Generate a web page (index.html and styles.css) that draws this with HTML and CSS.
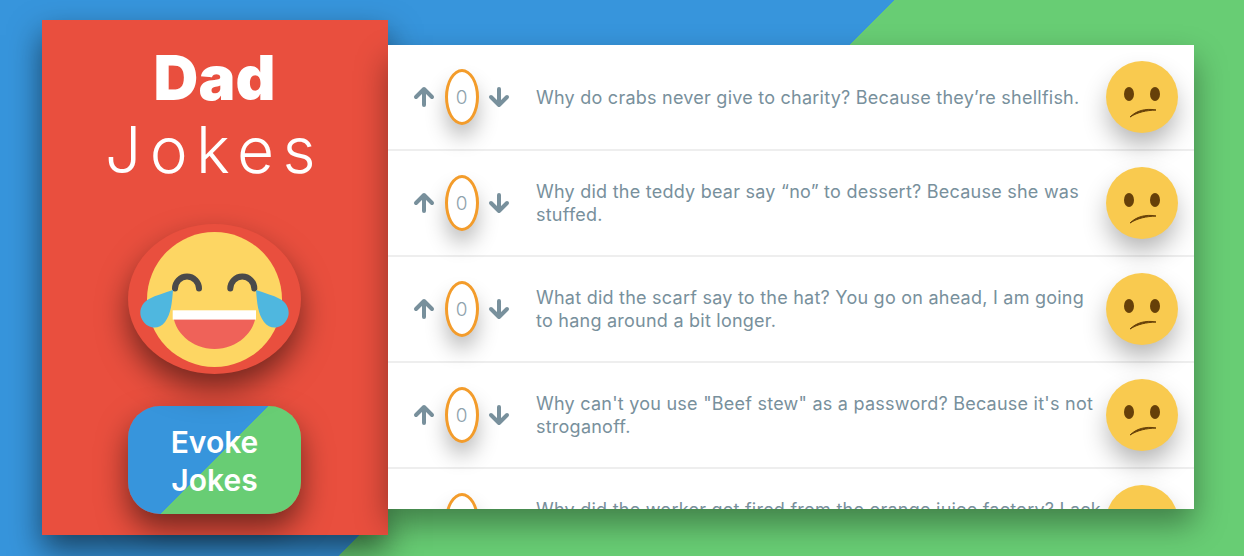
FILE: index.html
```html
<!DOCTYPE html>
<html lang="en">
<head>
  <meta charset="UTF-8" />
  <title>Dad Jokes</title>
  <link rel="stylesheet" href="styles.css">
</head>
<body>
  <div class="container">
    <aside class="sidebar">
      <h1 class="title"><span class="title-top">Dad</span> <span class="title-bottom">Jokes</span></h1>
      <div class="laugh">
        <svg class="laugh-face" viewBox="0 0 135 135">
          <circle cx="67.5" cy="67.5" r="67.5" fill="#fdd663"/>
          <path d="M28 56.5 A12 12 0 0 1 52 56.5 M83.3 56.5 A12 12 0 0 1 107.3 56.5" fill="none" stroke="#4a4a4a" stroke-width="6" stroke-linecap="round"/>
          <path d="M26 80 H109 C109 100 90 117 67.5 117 C45 117 26 100 26 80 Z" fill="#ef6259"/>
          <rect x="25.7" y="78.3" width="83.3" height="9.3" fill="#fff"/>
        </svg>
        <svg class="laugh-tears" viewBox="0 0 150 38">
          <path d="M33 0 C32 13 31 24 25 32 C19 40 8 39 3 31 C-2 24 0 14 9 9 C16 5 25 3 33 0 Z" fill="#4fb7df"/>
          <path d="M116 0 C117 13 118 24 124 32 C130 40 141 39 146 31 C151 24 149 14 140 9 C133 5 124 3 116 0 Z" fill="#4fb7df"/>
        </svg>
      </div>
      <button class="evoke">Evoke Jokes</button>
    </aside>
    <main class="jokes">
      <div class="joke">
        <div class="rating">
          <svg class="arrow" viewBox="0 0 22 22"><path d="M11 19 V3 M3 11 L11 3 L19 11"/></svg>
          <span class="score">0</span>
          <svg class="arrow" viewBox="0 0 22 22"><path d="M11 3 V19 M3 11 L11 19 L19 11"/></svg>
        </div>
        <p class="text">Why do crabs never give to charity? Because they’re shellfish.</p>
        <svg class="face" viewBox="0 0 72 72"><ellipse cx="23" cy="33" rx="5" ry="7" fill="#664009"/><ellipse cx="49" cy="33" rx="5" ry="7" fill="#664009"/><path d="M24 56 C30 50 39 47 50 49 C40 49.5 32 51 24 56 Z" fill="#664009" stroke="#664009" stroke-width="1"/></svg>
      </div>
      <div class="joke">
        <div class="rating">
          <svg class="arrow" viewBox="0 0 22 22"><path d="M11 19 V3 M3 11 L11 3 L19 11"/></svg>
          <span class="score">0</span>
          <svg class="arrow" viewBox="0 0 22 22"><path d="M11 3 V19 M3 11 L11 19 L19 11"/></svg>
        </div>
        <p class="text">Why did the teddy bear say “no” to dessert? Because she was stuffed.</p>
        <svg class="face" viewBox="0 0 72 72"><ellipse cx="23" cy="33" rx="5" ry="7" fill="#664009"/><ellipse cx="49" cy="33" rx="5" ry="7" fill="#664009"/><path d="M24 56 C30 50 39 47 50 49 C40 49.5 32 51 24 56 Z" fill="#664009" stroke="#664009" stroke-width="1"/></svg>
      </div>
      <div class="joke">
        <div class="rating">
          <svg class="arrow" viewBox="0 0 22 22"><path d="M11 19 V3 M3 11 L11 3 L19 11"/></svg>
          <span class="score">0</span>
          <svg class="arrow" viewBox="0 0 22 22"><path d="M11 3 V19 M3 11 L11 19 L19 11"/></svg>
        </div>
        <p class="text">What did the scarf say to the hat? You go on ahead, I am going to hang around a bit longer.</p>
        <svg class="face" viewBox="0 0 72 72"><ellipse cx="23" cy="33" rx="5" ry="7" fill="#664009"/><ellipse cx="49" cy="33" rx="5" ry="7" fill="#664009"/><path d="M24 56 C30 50 39 47 50 49 C40 49.5 32 51 24 56 Z" fill="#664009" stroke="#664009" stroke-width="1"/></svg>
      </div>
      <div class="joke">
        <div class="rating">
          <svg class="arrow" viewBox="0 0 22 22"><path d="M11 19 V3 M3 11 L11 3 L19 11"/></svg>
          <span class="score">0</span>
          <svg class="arrow" viewBox="0 0 22 22"><path d="M11 3 V19 M3 11 L11 19 L19 11"/></svg>
        </div>
        <p class="text">Why can't you use "Beef stew" as a password? Because it's not stroganoff.</p>
        <svg class="face" viewBox="0 0 72 72"><ellipse cx="23" cy="33" rx="5" ry="7" fill="#664009"/><ellipse cx="49" cy="33" rx="5" ry="7" fill="#664009"/><path d="M24 56 C30 50 39 47 50 49 C40 49.5 32 51 24 56 Z" fill="#664009" stroke="#664009" stroke-width="1"/></svg>
      </div>
      <div class="joke">
        <div class="rating">
          <svg class="arrow" viewBox="0 0 22 22"><path d="M11 19 V3 M3 11 L11 3 L19 11"/></svg>
          <span class="score">0</span>
          <svg class="arrow" viewBox="0 0 22 22"><path d="M11 3 V19 M3 11 L11 19 L19 11"/></svg>
        </div>
        <p class="text">Why did the worker get fired from the orange juice factory? Lack of concentration.</p>
        <svg class="face" viewBox="0 0 72 72"><ellipse cx="23" cy="33" rx="5" ry="7" fill="#664009"/><ellipse cx="49" cy="33" rx="5" ry="7" fill="#664009"/><path d="M24 56 C30 50 39 47 50 49 C40 49.5 32 51 24 56 Z" fill="#664009" stroke="#664009" stroke-width="1"/></svg>
      </div>
    </main>
  </div>
</body>
</html>
```

FILE: styles.css
```css
:root {
  --blue: #3795dc;
  --green: #68cd74;
  --red: #e94f3e;
  --slate: #78909c;
}

* {
  box-sizing: border-box;
}

body {
  margin: 0;
  height: 556px;
  overflow: hidden;
  font-family: "Inter", "Open Sans", sans-serif;
  background: linear-gradient(135deg, var(--blue) 49.7%, var(--green) 49.7%);
}

.container {
  display: flex;
  align-items: flex-start;
  height: 100%;
  padding: 20px 50px 0 42px;
}

.sidebar {
  display: flex;
  flex-direction: column;
  align-items: center;
  flex: 0 0 346px;
  height: 515px;
  padding: 24px 1px 0 0;
  background: var(--red);
  box-shadow: 0 15px 30px rgba(0, 0, 0, 0.55);
}

.title {
  margin: 0;
  text-align: center;
  color: #fff;
  font-weight: 400;
}

.title span {
  display: block;
}

.title-top {
  font-size: 62px;
  font-weight: 900;
  line-height: 68px;
}

.title-bottom {
  font-size: 64px;
  font-weight: 300;
  line-height: 76px;
  letter-spacing: 8.5px;
}

.laugh {
  position: relative;
  display: flex;
  align-items: center;
  justify-content: center;
  width: 173px;
  height: 150px;
  margin-top: 36px;
  border-radius: 50%;
  background: var(--red);
  box-shadow: 0 15px 30px rgba(0, 0, 0, 0.5);
}

.laugh-face {
  width: 135px;
  height: 135px;
}

.laugh-tears {
  position: absolute;
  left: 12px;
  top: 66px;
  width: 150px;
  height: 38px;
}

.evoke {
  width: 173px;
  height: 108px;
  margin-top: 32px;
  padding: 2px 30px 0;
  border: 0;
  border-radius: 32px;
  color: #fff;
  font-family: "Inter", sans-serif;
  font-size: 30px;
  font-weight: 600;
  line-height: 38px;
  background: linear-gradient(135deg, var(--blue) 50%, var(--green) 50%);
  box-shadow: 0 15px 30px rgba(0, 0, 0, 0.5);
}

.jokes {
  flex: 1;
  height: 464px;
  margin-top: 25px;
  overflow: hidden;
  background: #fff;
  box-shadow: 0 15px 30px rgba(0, 0, 0, 0.38);
  z-index: 1;
}

.joke {
  display: flex;
  align-items: center;
  height: 106px;
  padding: 0 16px 0 25px;
  border-bottom: 2px solid #eee;
}

.rating {
  display: flex;
  align-items: center;
  flex: 0 0 97px;
  justify-content: space-between;
}

.arrow {
  width: 22px;
  height: 22px;
  fill: none;
  stroke: var(--slate);
  stroke-width: 4;
  stroke-linecap: round;
  stroke-linejoin: round;
}

.score {
  display: flex;
  align-items: center;
  justify-content: center;
  width: 34px;
  height: 56px;
  border: 3px solid #f39c2b;
  border-radius: 50%;
  color: #8fa3ad;
  font-size: 19px;
  font-weight: 300;
  background: #fff;
  box-shadow: 0 14px 22px -2px rgba(0, 0, 0, 0.3);
}

.text {
  flex: 1;
  margin: 0;
  padding-left: 26px;
  color: var(--slate);
  font-size: 18px;
  letter-spacing: 0.24px;
  line-height: 23px;
}

.face {
  flex: 0 0 72px;
  width: 72px;
  height: 72px;
  border-radius: 50%;
  background: #f9ca4f;
  box-shadow: 0 14px 26px -2px rgba(0, 0, 0, 0.3);
}
```
